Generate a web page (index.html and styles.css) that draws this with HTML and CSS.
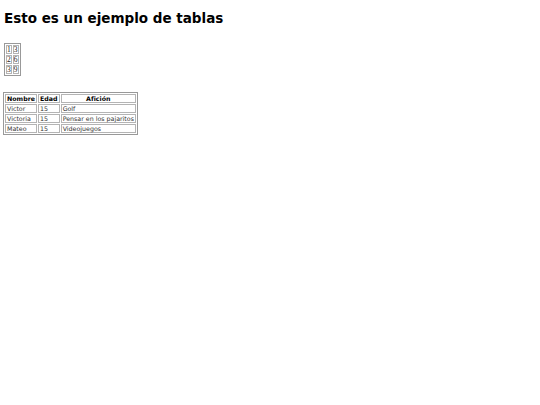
FILE: index.html
```html
<!DOCTYPE html>
<html lang="es">
<head>
<meta charset="utf-8">
<title>Tablas</title>
<link rel="stylesheet" href="styles.css">
</head>
<body>
<h1 class="title">Esto es un ejemplo de tablas</h1>
<table class="nums">
<tr><td>1</td><td>3</td></tr>
<tr><td>2</td><td>6</td></tr>
<tr><td>3</td><td>9</td></tr>
</table>
<table class="people">
<tr><th>Nombre</th><th>Edad</th><th>Afición</th></tr>
<tr><td>Victor</td><td>15</td><td>Golf</td></tr>
<tr><td>Victoria</td><td>15</td><td>Pensar en los pajaritos</td></tr>
<tr><td>Mateo</td><td>15</td><td>Videojuegos</td></tr>
</table>
</body>
</html>
```
FILE: styles.css
```css
html, body { background: #fff; }
body {
  margin: 3px 3px;
  font-family: "DejaVu Sans", Verdana, sans-serif;
  color: #000;
}
.title {
  font-size: 13.5px;
  font-weight: bold;
  margin: 7px 0 17px 1px;
}
table {
  border: 1px solid #999;
  border-spacing: 1px;
  font-size: 6.3px;
}
td, th {
  border: 1px solid #b4b4b4;
  padding: 1px 1px 0;
  line-height: 6px;
}
td { color: #333; }
th { color: #000; }
.nums {
  font-family: "Liberation Serif", "DejaVu Serif", serif;
  font-size: 7.5px;
  margin: 0 0 16px 1px;
}
.nums td { padding: 1px 0 0; line-height: 6px; color: #222; }
.people th { text-align: center; }
.people td { text-align: left; }
```
